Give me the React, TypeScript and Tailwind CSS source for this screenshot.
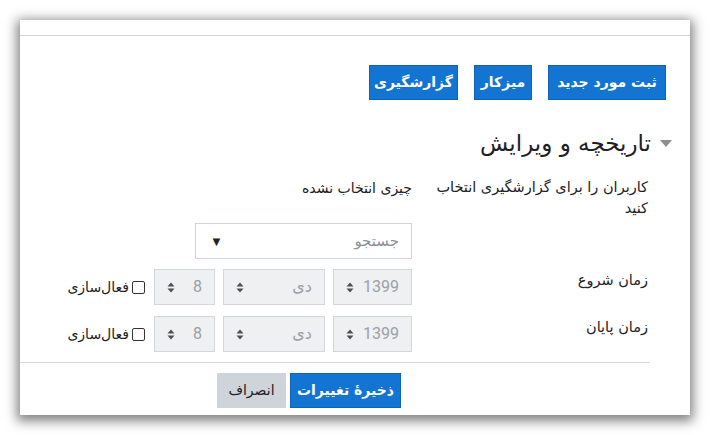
import React from "react";

const fa = { fontFamily: '"DejaVu Sans", sans-serif' };
const num = { fontFamily: 'Roboto, "DejaVu Sans", sans-serif' };

// small up/down arrows used by the disabled selects
function UpDown() {
  return (
    <svg width="8" height="11" viewBox="0 0 8 11" className="shrink-0">
      <path d="M4 0.5 L7.5 4.5 H0.5 Z" fill="#495057" />
      <path d="M4 10.5 L7.5 6.5 H0.5 Z" fill="#495057" />
    </svg>
  );
}

function DateSelect({ value, width, isNum }: { value: string; width: string; isNum?: boolean }) {
  return (
    <div
      className={`${width} h-[36px] bg-[#eff0f2] border border-[#d3d7db] flex items-center justify-between pr-[12px] pl-[12px]`}
    >
      <span className="text-[16px] text-[#9aa0a6] leading-none" style={isNum ? num : fa}>
        {value}
      </span>
      <UpDown />
    </div>
  );
}

function DateRow({ label }: { label: string }) {
  return (
    <div className="flex items-start">
      <div className="w-[236px] pt-[1px] text-[14.5px] leading-[20px] text-[#1d2125]" style={fa}>
        {label}
      </div>
      <div className="flex items-center gap-[8px]">
        <DateSelect value="1399" width="w-[79px]" isNum />
        <DateSelect value="دی" width="w-[102px]" />
        <DateSelect value="8" width="w-[61px]" isNum />
        <label className="flex items-center gap-[3px] mr-[1px] text-[14px] text-[#1d2125]" style={fa}>
          <span className="w-[13px] h-[13px] border border-[#333] rounded-[2px] bg-white" />
          <span>فعال‌سازی</span>
        </label>
      </div>
    </div>
  );
}

export default function App() {
  const topButtons = [
    { label: "ثبت مورد جدید", w: "w-[118px]" },
    { label: "میزکار", w: "w-[58px]" },
    { label: "گزارشگیری", w: "w-[89px]" },
  ];

  return (
    <div className="w-[710px] h-[435px] bg-white pt-[20px] px-[20px] overflow-hidden">
      <div dir="rtl" className="h-[395px] bg-white shadow-[0_3px_11px_3px_rgba(0,0,0,0.5)]">
        {/* top strip */}
        <div className="h-[16px] border-b border-[#d4d4d4]" />

        {/* action buttons */}
        <div className="flex gap-[16px] mr-[24px] mt-[29px]">
          {topButtons.map((b) => (
            <button
              key={b.label}
              className={`${b.w} h-[35px] bg-[#1375d1] border border-[#0d63b4] text-white text-[14px] font-bold`}
              style={fa}
            >
              {b.label}
            </button>
          ))}
        </div>

        {/* section heading */}
        <div className="flex items-center gap-[9px] mr-[18px] mt-[28px] h-[30px]">
          <svg width="12" height="7" viewBox="0 0 12 7">
            <path d="M0 0 H12 L6 7 Z" fill="#8e8e8e" />
          </svg>
          <h2 className="text-[23px] text-[#1d2125] leading-none" style={fa}>
            تاریخچه و ویرایش
          </h2>
        </div>

        {/* form */}
        <div className="ml-0 mr-[40px] mt-[19px]">
          <div className="pr-[2px]">
            <div className="flex items-start">
              <div className="w-[222px] ml-[14px] text-[14.5px] leading-[21px] text-[#1d2125]" style={fa}>
                کاربران را برای گزارشگیری انتخاب کنید
              </div>
              <div className="flex flex-col">
                <div className="h-[22px] leading-[22px] text-[14px] text-[#1d2125]" style={fa}>
                  چیزی انتخاب نشده
                </div>
                <div className="mt-[24px] w-[217px] h-[36px] border border-[#ced4da] bg-white flex items-center justify-between pr-[12px] pl-[14px]">
                  <span className="text-[15px] text-[#8a9096]" style={fa}>
                    جستجو
                  </span>
                  <span className="text-[13px] text-[#222] leading-none">▼</span>
                </div>
              </div>
            </div>

            <div className="mt-[10px]">
              <DateRow label="زمان شروع" />
            </div>
            <div className="mt-[11px]">
              <DateRow label="زمان پایان" />
            </div>
          </div>

          <div className="mt-[10px] border-t border-[#d9d9d9]" />

          <div className="flex gap-[4px] mt-[10px] mr-[249px]">
            <button
              className="w-[111px] h-[35px] bg-[#1375d1] border border-[#0d63b4] text-white text-[14px] font-bold"
              style={fa}
            >
              ذخیرهٔ تغییرات
            </button>
            <button
              className="w-[69px] h-[35px] bg-[#ced4da] text-[#1d2125] text-[14px]"
              style={fa}
            >
              انصراف
            </button>
          </div>
        </div>
      </div>
    </div>
  );
}
